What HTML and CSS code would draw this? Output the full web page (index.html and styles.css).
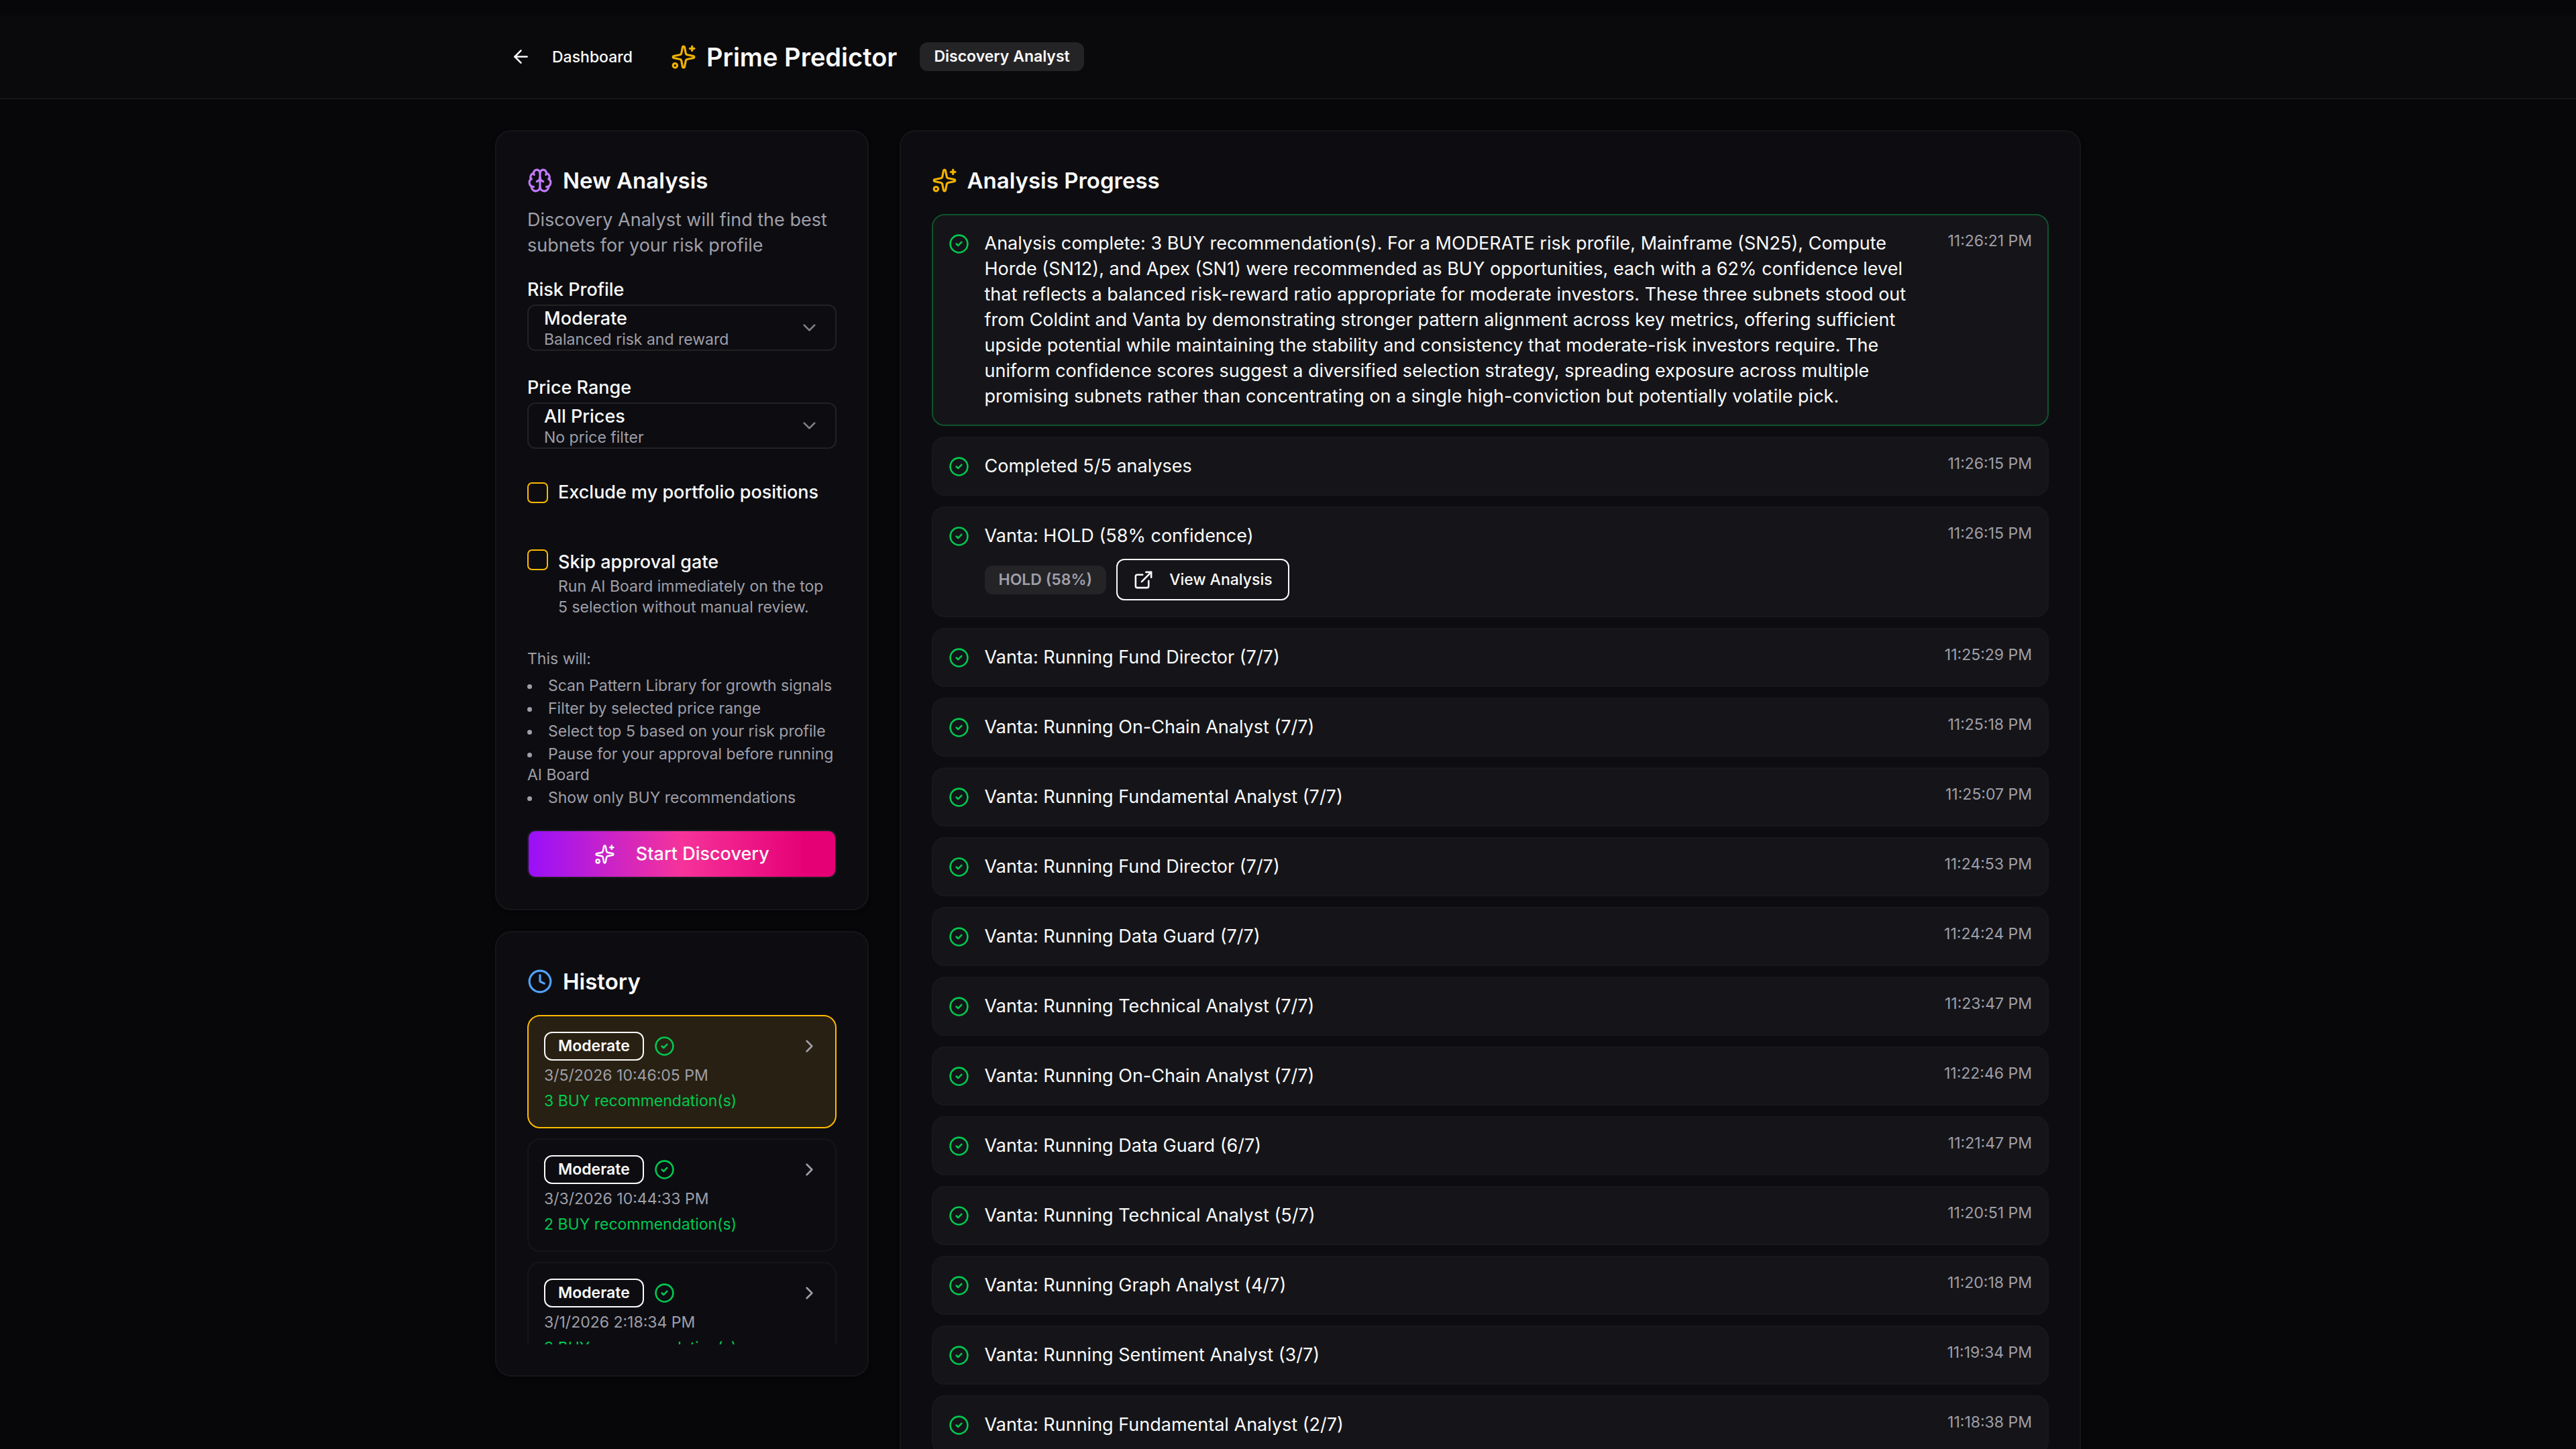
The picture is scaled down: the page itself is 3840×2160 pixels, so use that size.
FILE: index.html
```html
<!DOCTYPE html>
<html lang="en">
<head>
    <meta charset="UTF-8">
    <meta name="viewport" content="width=device-width, initial-scale=1.0">
    <title>Prime Predictor</title>
    <link rel="stylesheet" href="styles.css">
</head>
<body>
    <!-- Icon set -->
    <svg class="icon-defs" aria-hidden="true">
        <symbol id="arrow-left" viewBox="0 0 24 24"><path d="m12 19-7-7 7-7"/><path d="M19 12H5"/></symbol>
        <symbol id="sparkles" viewBox="0 0 24 24">
            <path d="M11.017 2.814a1 1 0 0 1 1.966 0l1.051 5.558a2 2 0 0 0 1.594 1.594l5.558 1.051a1 1 0 0 1 0 1.966l-5.558 1.051a2 2 0 0 0-1.594 1.594l-1.051 5.558a1 1 0 0 1-1.966 0l-1.051-5.558a2 2 0 0 0-1.594-1.594l-5.558-1.051a1 1 0 0 1 0-1.966l5.558-1.051a2 2 0 0 0 1.594-1.594z"/>
            <path d="M20 2v4"/><path d="M22 4h-4"/><circle cx="4" cy="20" r="2"/>
        </symbol>
        <symbol id="brain" viewBox="0 0 24 24">
            <path d="M12 18V5"/><path d="M15 13a4.17 4.17 0 0 1-3-4 4.17 4.17 0 0 1-3 4"/>
            <path d="M17.598 6.5A3 3 0 1 0 12 5a3 3 0 1 0-5.598 1.5"/><path d="M17.997 5.125a4 4 0 0 1 2.526 5.77"/>
            <path d="M18 18a4 4 0 0 0 2-7.464"/><path d="M19.967 17.483A4 4 0 1 1 12 18a4 4 0 1 1-7.967-.517"/>
            <path d="M6 18a4 4 0 0 1-2-7.464"/><path d="M6.003 5.125a4 4 0 0 0-2.526 5.77"/>
        </symbol>
        <symbol id="clock" viewBox="0 0 24 24"><circle cx="12" cy="12" r="10"/><path d="M12 6v6l4 2"/></symbol>
        <symbol id="check" viewBox="0 0 24 24"><circle cx="12" cy="12" r="10"/><path d="m9 12 2 2 4-4"/></symbol>
        <symbol id="chevron-down" viewBox="0 0 24 24"><path d="m6 9 6 6 6-6"/></symbol>
        <symbol id="chevron-right" viewBox="0 0 24 24"><path d="m9 18 6-6-6-6"/></symbol>
        <symbol id="external" viewBox="0 0 24 24"><path d="M15 3h6v6"/><path d="M10 14 21 3"/><path d="M18 13v6a2 2 0 0 1-2 2H5a2 2 0 0 1-2-2V8a2 2 0 0 1 2-2h6"/></symbol>
    </svg>

    <header class="topbar">
        <div class="container topbar-inner">
            <a class="back-link" href="#"><svg class="icon"><use href="#arrow-left"/></svg>Dashboard</a>
            <h1 class="page-title"><svg class="icon icon-lg yellow"><use href="#sparkles"/></svg>Prime Predictor</h1>
            <span class="badge badge-solid">Discovery Analyst</span>
        </div>
    </header>

    <main class="container layout">
        <div class="sidebar">
            <!-- New analysis form -->
            <section class="card">
                <h2 class="card-title"><svg class="icon icon-lg purple"><use href="#brain"/></svg>New Analysis</h2>
                <p class="card-description">Discovery Analyst will find the best subnets for your risk profile</p>
                <form class="form">
                    <div class="field">
                        <label for="risk">Risk Profile</label>
                        <div class="select-wrap">
                            <select id="risk">
                                <option>Moderate</option>
                            </select>
                            <span class="select-hint">Balanced risk and reward</span>
                            <svg class="icon select-arrow"><use href="#chevron-down"/></svg>
                        </div>
                    </div>
                    <div class="field">
                        <label for="price">Price Range</label>
                        <div class="select-wrap">
                            <select id="price">
                                <option>All Prices</option>
                            </select>
                            <span class="select-hint">No price filter</span>
                            <svg class="icon select-arrow"><use href="#chevron-down"/></svg>
                        </div>
                    </div>
                    <div class="check-row">
                        <input type="checkbox" id="exclude">
                        <label for="exclude">Exclude my portfolio positions</label>
                    </div>
                    <div class="check-row check-row-top">
                        <input type="checkbox" id="skip">
                        <div>
                            <label for="skip">Skip approval gate</label>
                            <p class="hint">Run AI Board immediately on the top 5 selection without manual review.</p>
                        </div>
                    </div>
                    <div class="steps">
                        <p>This will:</p>
                        <ul>
                            <li>Scan Pattern Library for growth signals</li>
                            <li>Filter by selected price range</li>
                            <li>Select top 5 based on your risk profile</li>
                            <li>Pause for your approval before running AI Board</li>
                            <li>Show only BUY recommendations</li>
                        </ul>
                    </div>
                    <button type="button" class="start-button"><svg class="icon"><use href="#sparkles"/></svg>Start Discovery</button>
                </form>
            </section>

            <!-- History -->
            <section class="card">
                <h2 class="card-title"><svg class="icon icon-lg blue"><use href="#clock"/></svg>History</h2>
                <div class="history-list">
                    <button type="button" class="history-item active">
                        <span class="history-top">
                            <span class="badge badge-outline">Moderate</span>
                            <svg class="icon green"><use href="#check"/></svg>
                            <svg class="icon history-arrow"><use href="#chevron-right"/></svg>
                        </span>
                        <span class="history-date">3/5/2026 10:46:05 PM</span>
                        <span class="history-result">3 BUY recommendation(s)</span>
                    </button>
                    <button type="button" class="history-item">
                        <span class="history-top">
                            <span class="badge badge-outline">Moderate</span>
                            <svg class="icon green"><use href="#check"/></svg>
                            <svg class="icon history-arrow"><use href="#chevron-right"/></svg>
                        </span>
                        <span class="history-date">3/3/2026 10:44:33 PM</span>
                        <span class="history-result">2 BUY recommendation(s)</span>
                    </button>
                    <button type="button" class="history-item">
                        <span class="history-top">
                            <span class="badge badge-outline">Moderate</span>
                            <svg class="icon green"><use href="#check"/></svg>
                            <svg class="icon history-arrow"><use href="#chevron-right"/></svg>
                        </span>
                        <span class="history-date">3/1/2026 2:18:34 PM</span>
                        <span class="history-result">3 BUY recommendation(s)</span>
                    </button>
                </div>
            </section>
        </div>

        <!-- Progress log -->
        <section class="card progress">
            <h2 class="card-title"><svg class="icon icon-lg yellow"><use href="#sparkles"/></svg>Analysis Progress</h2>
            <ul class="log">
                <li class="log-item done">
                    <svg class="icon green"><use href="#check"/></svg>
                    <p class="log-text">Analysis complete: 3 BUY recommendation(s). For a MODERATE risk profile, Mainframe (SN25), Compute Horde (SN12), and Apex (SN1) were recommended as BUY opportunities, each with a 62% confidence level that reflects a balanced risk-reward ratio appropriate for moderate investors. These three subnets stood out from Coldint and Vanta by demonstrating stronger pattern alignment across key metrics, offering sufficient upside potential while maintaining the stability and consistency that moderate-risk investors require. The uniform confidence scores suggest a diversified selection strategy, spreading exposure across multiple promising subnets rather than concentrating on a single high-conviction but potentially volatile pick.</p>
                    <time>11:26:21 PM</time>
                </li>
                <li class="log-item">
                    <svg class="icon green"><use href="#check"/></svg>
                    <p class="log-text">Completed 5/5 analyses</p>
                    <time>11:26:15 PM</time>
                </li>
                <li class="log-item">
                    <svg class="icon green"><use href="#check"/></svg>
                    <div class="log-text">
                        <p>Vanta: HOLD (58% confidence)</p>
                        <div class="log-actions">
                            <span class="badge badge-muted">HOLD (58%)</span>
                            <button type="button" class="view-button"><svg class="icon"><use href="#external"/></svg>View Analysis</button>
                        </div>
                    </div>
                    <time>11:26:15 PM</time>
                </li>
                <li class="log-item">
                    <svg class="icon green"><use href="#check"/></svg>
                    <p class="log-text">Vanta: Running Fund Director (7/7)</p>
                    <time>11:25:29 PM</time>
                </li>
                <li class="log-item">
                    <svg class="icon green"><use href="#check"/></svg>
                    <p class="log-text">Vanta: Running On-Chain Analyst (7/7)</p>
                    <time>11:25:18 PM</time>
                </li>
                <li class="log-item">
                    <svg class="icon green"><use href="#check"/></svg>
                    <p class="log-text">Vanta: Running Fundamental Analyst (7/7)</p>
                    <time>11:25:07 PM</time>
                </li>
                <li class="log-item">
                    <svg class="icon green"><use href="#check"/></svg>
                    <p class="log-text">Vanta: Running Fund Director (7/7)</p>
                    <time>11:24:53 PM</time>
                </li>
                <li class="log-item">
                    <svg class="icon green"><use href="#check"/></svg>
                    <p class="log-text">Vanta: Running Data Guard (7/7)</p>
                    <time>11:24:24 PM</time>
                </li>
                <li class="log-item">
                    <svg class="icon green"><use href="#check"/></svg>
                    <p class="log-text">Vanta: Running Technical Analyst (7/7)</p>
                    <time>11:23:47 PM</time>
                </li>
                <li class="log-item">
                    <svg class="icon green"><use href="#check"/></svg>
                    <p class="log-text">Vanta: Running On-Chain Analyst (7/7)</p>
                    <time>11:22:46 PM</time>
                </li>
                <li class="log-item">
                    <svg class="icon green"><use href="#check"/></svg>
                    <p class="log-text">Vanta: Running Data Guard (6/7)</p>
                    <time>11:21:47 PM</time>
                </li>
                <li class="log-item">
                    <svg class="icon green"><use href="#check"/></svg>
                    <p class="log-text">Vanta: Running Technical Analyst (5/7)</p>
                    <time>11:20:51 PM</time>
                </li>
                <li class="log-item">
                    <svg class="icon green"><use href="#check"/></svg>
                    <p class="log-text">Vanta: Running Graph Analyst (4/7)</p>
                    <time>11:20:18 PM</time>
                </li>
                <li class="log-item">
                    <svg class="icon green"><use href="#check"/></svg>
                    <p class="log-text">Vanta: Running Sentiment Analyst (3/7)</p>
                    <time>11:19:34 PM</time>
                </li>
                <li class="log-item">
                    <svg class="icon green"><use href="#check"/></svg>
                    <p class="log-text">Vanta: Running Fundamental Analyst (2/7)</p>
                    <time>11:18:38 PM</time>
                </li>
            </ul>
        </section>
    </main>
</body>
</html>
```

FILE: styles.css
```css
* {
    box-sizing: border-box;
}

body {
    margin: 0;
    padding-top: 23px;
    height: 100vh;
    overflow: hidden;
    background-color: #070709;
    color: #fafafa;
    font-family: Inter, "Liberation Sans", sans-serif;
    font-size: 27px;
    line-height: 38px;
}

h1, h2, p, ul {
    margin: 0;
    padding: 0;
}

button, select {
    font: inherit;
    color: inherit;
}

button {
    cursor: pointer;
}

.container {
    max-width: 2456px;
    margin: 0 auto;
    padding: 0 46px;
}

/* Icons */
.icon-defs {
    display: none;
}

.icon {
    width: 31px;
    height: 31px;
    flex-shrink: 0;
    fill: none;
    stroke: currentColor;
    stroke-width: 2;
    stroke-linecap: round;
    stroke-linejoin: round;
}

.icon-lg {
    width: 38px;
    height: 38px;
}

.yellow { color: #f0b100; }
.purple { color: #c27aff; }
.blue { color: #51a2ff; }
.green { color: #00c950; }

/* Header */
.topbar {
    background-color: #0a0a0c;
    border-bottom: 2px solid #161618;
}

.topbar-inner {
    display: flex;
    align-items: center;
    gap: 34px;
    height: 123px;
}

.back-link {
    display: flex;
    align-items: center;
    gap: 31px;
    padding: 0 23px;
    color: inherit;
    font-size: 23px;
    font-weight: 500;
    text-decoration: none;
}

.page-title {
    display: flex;
    align-items: center;
    gap: 15px;
    font-size: 38px;
    font-weight: 600;
}

.badge {
    padding: 4px 19px;
    border: 2px solid transparent;
    border-radius: 12px;
    font-size: 23px;
    font-weight: 600;
    line-height: 31px;
}

.badge-solid {
    background-color: #242427;
}

.badge-muted {
    background-color: #242427;
    color: #9f9fa9;
}

.badge-outline {
    border-color: #fafafa;
}

/* Layout */
.layout {
    display: grid;
    grid-template-columns: repeat(4, 1fr);
    align-items: start;
    gap: 46px;
    padding-top: 46px;
}

.sidebar {
    display: flex;
    flex-direction: column;
    gap: 31px;
}

.progress {
    grid-column: span 3;
}

.card {
    padding: 46px;
    background-color: #0d0d11;
    border: 2px solid #161619;
    border-radius: 24px;
    box-shadow: 0 2px 6px rgba(0, 0, 0, 0.4);
}

.card-title {
    display: flex;
    align-items: center;
    gap: 15px;
    font-size: 33px;
    font-weight: 600;
    line-height: 54px;
}

.card-description {
    margin-top: 13px;
    color: #9f9fa9;
}

/* Form */
.form {
    display: flex;
    flex-direction: column;
    gap: 36px;
    margin-top: 28px;
}

.form label {
    display: block;
    font-weight: 500;
}

.select-wrap {
    position: relative;
    margin-top: 3px;
}

/* value sits in the upper half, the hint is laid over the lower half */
.select-wrap select {
    display: block;
    width: 100%;
    height: 69px;
    padding: 0 23px 32px;
    appearance: none;
    background-color: transparent;
    border: 2px solid #222225;
    border-radius: 12px;
    font-weight: 500;
}

.select-hint {
    position: absolute;
    left: 25px;
    bottom: 1px;
    color: #9f9fa9;
    font-size: 23px;
    line-height: 31px;
    pointer-events: none;
}

.select-arrow {
    position: absolute;
    right: 25px;
    top: 19px;
    opacity: 0.5;
    pointer-events: none;
}

.check-row {
    display: flex;
    align-items: center;
    gap: 15px;
    padding: 10px 0;
}

.check-row-top {
    align-items: flex-start;
    padding-top: 20px;
}

.check-row input {
    appearance: none;
    flex-shrink: 0;
    width: 31px;
    height: 31px;
    margin: 0;
    border: 2px solid #ffb900;
    border-radius: 7px;
}

.hint, .steps {
    color: #9f9fa9;
    font-size: 23px;
    line-height: 31px;
}

.hint {
    margin-top: 2px;
}

.steps ul {
    margin-top: 9px;
    list-style-position: inside;
}

.steps li + li {
    margin-top: 3px;
}

.start-button {
    display: flex;
    align-items: center;
    justify-content: center;
    gap: 31px;
    height: 72px;
    margin-top: -4px;
    background: linear-gradient(to right, #9810fa, #f6339a 50%, #e60076 90%);
    border: 2px solid #1c1c20;
    border-radius: 12px;
    font-weight: 500;
}

/* History */
.history-list {
    display: flex;
    flex-direction: column;
    gap: 15px;
    max-height: 491px;
    margin-top: 23px;
    overflow: hidden;
}

.history-item {
    display: flex;
    flex-direction: column;
    flex-shrink: 0;
    gap: 7px;
    padding: 23px;
    background-color: transparent;
    border: 2px solid #161619;
    border-radius: 19px;
    font-size: 23px;
    line-height: 31px;
    text-align: left;
}

.history-item.active {
    background-color: #282012;
    border-color: #ffb900;
}

.history-top {
    display: flex;
    align-items: center;
    gap: 15px;
}

.history-arrow {
    margin-left: auto;
    color: #9f9fa9;
}

.history-date {
    color: #9f9fa9;
}

.history-result {
    color: #00c950;
}

/* Progress log */
.log {
    display: flex;
    flex-direction: column;
    gap: 16px;
    margin-top: 23px;
    list-style: none;
}

.log-item {
    display: flex;
    align-items: flex-start;
    gap: 23px;
    padding: 23px;
    background-color: #151519;
    border: 2px solid #18181b;
    border-radius: 19px;
}

.log-item.done {
    border-color: #0e532c;
}

.log-item > .icon {
    margin-top: 4px;
}

.log-text {
    flex: 1;
}

.log-actions {
    display: flex;
    align-items: center;
    gap: 15px;
    margin-top: 15px;
}

.view-button {
    display: flex;
    align-items: center;
    gap: 23px;
    height: 62px;
    padding: 0 23px;
    background-color: transparent;
    border: 2px solid #fafafa;
    border-radius: 12px;
    font-size: 23px;
    font-weight: 500;
}

time {
    color: #9f9fa9;
    font-size: 23px;
    line-height: 31px;
}
```
